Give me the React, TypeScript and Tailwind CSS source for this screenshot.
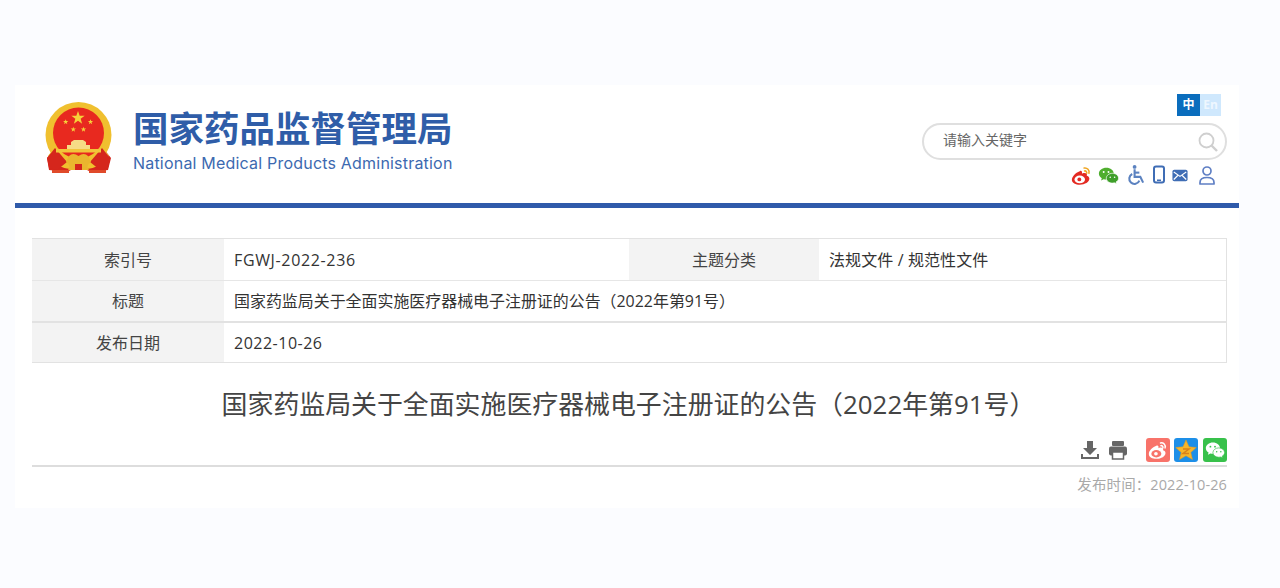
const cjk = "font-['Open_Sans','Noto_Sans_CJK_SC',sans-serif]";
const star = "M0 -1 L.24 -.32 H.95 L.38 .12 L.59 .81 L0 .4 L-.59 .81 L-.38 .12 L-.95 -.32 H-.24 Z";

function Emblem() {
  return (
    <svg width="68" height="72" viewBox="0 0 68 72" className="shrink-0">
      <path d="M10 46 L2 56 L4 68 L22 70 L34 64 L46 70 L63 68 L66 56 L58 46 Z" fill="#d5261c" />
      <circle cx="33.500" cy="33" r="33" fill="#f0c02f" />
      <circle cx="33.500" cy="31" r="25.500" fill="#e8291f" />
      <path d="M6 50 Q20 66 33.500 61 Q47 66 61 50 L64 54 Q50 71 33.500 66 Q17 71 3 54 Z" fill="#f0c02f" />
      <path d="M10 46 L22 60 L12 68 L4 66 L2 56 Z" fill="#d5261c" />
      <path d="M57 46 L45 60 L55 68 L63 66 L65 56 Z" fill="#d5261c" />
      <path d={star} transform="translate(33 16) scale(7)" fill="#f6d13a" />
      <path d={star} transform="translate(20.700 20) scale(2.800)" fill="#f6d13a" />
      <path d={star} transform="translate(45.500 20) scale(2.800)" fill="#f6d13a" />
      <path d={star} transform="translate(28.300 27.500) scale(2.800)" fill="#f6d13a" />
      <path d={star} transform="translate(38.500 27.500) scale(2.800)" fill="#f6d13a" />
      <path d="M22 47 V43 H26 V40 L29 38 H38 L41 40 V43 H45 V47 Z" fill="#f6dc86" />
      <rect x="11" y="47" width="45" height="3.500" fill="#f2c53a" />
      <path d="M24 54 Q28 50 33.500 54 Q39 50 43 54 L46 60 Q40 64 44 68 H23 Q27 64 21 60 Z" fill="#eab62e" />
      <rect x="30" y="62" width="7" height="6" fill="#d5261c" />
      <rect x="7" y="68" width="17" height="3" fill="#e04a2a" />
      <rect x="44" y="68" width="17" height="3" fill="#e04a2a" />
    </svg>
  );
}

function WeiboGlyph({ size, body, eye, arc }: { size: number; body: string; eye: string; arc: string }) {
  return (
    <svg width={size} height={size} viewBox="0 0 24 24">
      <path d="M10 7c-5 2-9 6-9 10 0 3.500 4.500 5.500 9 5.500 6 0 11-3 11-7 0-2.200-2-3-3-3.300.6-1.700.2-3.200-2.800-3.200-1 0-2.200.6-2.700.8.500-1.800-.300-4-2.500-2.800z" fill={body} />
      <ellipse cx="10" cy="16.500" rx="6" ry="4.400" fill={eye} />
      <circle cx="9.500" cy="16.500" r="2.200" fill={body} />
      <path d="M15 3.500c3.500-.6 6.500 2.400 5.500 6M15.500 6.800c1.600-.3 2.800 1 2.400 2.600" fill="none" stroke={arc} strokeWidth="1.800" strokeLinecap="round" />
    </svg>
  );
}

function WechatGlyph({ size, big, small, dot }: { size: number; big: string; small: string; dot: string }) {
  return (
    <svg width={size} height={size} viewBox="0 0 24 24">
      <path d="M9.500 3C4.800 3 1 6 1 9.800c0 2.200 1.300 4.100 3.300 5.300L3.500 17.800l3-1.600c1 .3 2 .4 3 .4 4.700 0 8.500-3 8.500-6.800S14.200 3 9.500 3z" fill={big} />
      <path d="M16.500 9.500c-3.900 0-7 2.500-7 5.600s3.100 5.600 7 5.600c.8 0 1.600-.1 2.300-.3l2.500 1.300-.7-2.200c1.700-1 2.900-2.600 2.900-4.400 0-3.100-3.100-5.600-7-5.600z" fill={small} stroke={dot} strokeWidth="0.800" />
      <circle cx="6.500" cy="8" r="1.100" fill={dot} />
      <circle cx="12" cy="8" r="1.100" fill={dot} />
      <circle cx="14" cy="14" r="0.900" fill={dot} />
      <circle cx="19" cy="14" r="0.900" fill={dot} />
    </svg>
  );
}

function TopIcons() {
  return (
    <div className="flex items-center justify-end pr-[12px] h-[24px]">
      <WeiboGlyph size={21} body="#e32a22" eye="#ffffff" arc="#f0a623" />
      <div className="ml-[6px]">
        <WechatGlyph size={21} big="#4fae2e" small="#3f9f2a" dot="#ffffff" />
      </div>
      <svg width="19" height="22" viewBox="0 0 20 22" fill="none" stroke="#5b82c0" strokeWidth="2.200" className="ml-[8px]">
        <circle cx="8" cy="2.500" r="2" fill="#5b82c0" stroke="none" />
        <path d="M8 5v8h6l3 6" />
        <path d="M8 8.500h5" />
        <path d="M5.500 10a5.500 5.500 0 1 0 7.500 7" />
      </svg>
      <svg width="14" height="20" viewBox="0 0 14 20" fill="none" className="ml-[6px]">
        <rect x="2" y="1.500" width="10" height="16" rx="2" stroke="#3f6db5" strokeWidth="2" />
        <rect x="5" y="14.500" width="4" height="1.500" fill="#3f6db5" />
      </svg>
      <svg width="16" height="13" viewBox="0 0 18 14" className="ml-[6px]">
        <rect x="0.500" y="0.500" width="17" height="13" rx="2" fill="#3f6db5" />
        <path d="M2 3l7 5 7-5M2 11.500l4.500-4.500M16 11.500L11.500 7" stroke="#ffffff" strokeWidth="1.300" fill="none" />
      </svg>
      <svg width="20" height="21" viewBox="0 0 20 20" fill="none" stroke="#5f7fc4" strokeWidth="1.700" className="ml-[9px] -mr-[2px]">
        <circle cx="10" cy="5.500" r="4" />
        <path d="M3 18.500v-1.500c0-2.800 2.500-5 7-5s7 2.200 7 5v1.500z" strokeLinejoin="round" />
      </svg>
    </div>
  );
}

function Cell({ label, children, w, lw }: { label: string; children: React.ReactNode; w?: string; lw?: string }) {
  return (
    <>
      <div className={`${lw ?? "w-[192px]"} shrink-0 bg-[#f3f3f3] flex items-center justify-center text-[16px] text-[#444]`}>{label}</div>
      <div className={`${w ?? "flex-1"} flex items-center pl-[10px] text-[16px] text-[#333]`}>{children}</div>
    </>
  );
}

export default function App() {
  return (
    <div className={`w-[1280px] h-[588px] bg-[#fbfcff] pt-[85px] pl-[15px] overflow-hidden ${cjk}`}>
      <div className="w-[1224px] h-[423px] bg-white">
        <header className="h-[118px] flex justify-between">
          <div className="flex pt-[17px] pl-[30px]">
            <Emblem />
            <div className="ml-[20px] pt-[1px]">
              <div className="text-[35.500px] leading-[50px] h-[50px] font-bold text-[#2f5da8] whitespace-nowrap">国家药品监督管理局</div>
              <div className="text-[16px] leading-[22px] -mt-[1px] text-[#3c69b0] tracking-[0.200px] font-['Inter',sans-serif] whitespace-nowrap">National Medical Products Administration</div>
            </div>
          </div>
          <div className="w-[305px] mr-[12px] flex flex-col">
            <div className="flex justify-end pt-[9px] pr-[6px]">
              <span className="w-[23px] h-[22px] bg-[#0a6dbd] text-white text-[12px] font-bold flex items-center justify-center">中</span>
              <span className="w-[21px] h-[22px] bg-[#cfe8fd] text-[#eef7ff] text-[12px] font-bold flex items-center justify-center">En</span>
            </div>
            <div className="mt-[7px] h-[37px] w-[305px] rounded-full border-2 border-[#dfdfdf] flex items-center justify-between pl-[19px] pr-[6px]">
              <span className="text-[14px] leading-[20px] -mt-[3px] text-[#666]">请输入关键字</span>
              <svg width="22" height="22" viewBox="0 0 22 22" fill="none" stroke="#cfcfcf" strokeWidth="1.800">
                <circle cx="9.500" cy="9.500" r="7" />
                <path d="M14.500 14.500L20 20" strokeWidth="2.400" />
              </svg>
            </div>
            <div className="mt-[3px]">
              <TopIcons />
            </div>
          </div>
        </header>
        <div className="h-[5px] bg-[#2f5aaa]" />

        <div className="mx-[17px] mt-[30px] w-[1195px] border-t border-r border-[#e2e2e2]">
          <div className="flex h-[42px] border-b border-[#e6e6e6]">
            <Cell label="索引号" w="w-[405px]"><span className="tracking-[0.650px]">FGWJ-2022-236</span></Cell>
            <Cell label="主题分类" lw="w-[190px]"><span className="tracking-[0.100px]">法规文件 / 规范性文件</span></Cell>
          </div>
          <div className="flex h-[42px] border-b-2 border-[#e2e2e2]">
            <Cell label="标题"><span className="text-[15.950px] mt-[2px]">国家药监局关于全面实施医疗器械电子注册证的公告（2022年第91号）</span></Cell>
          </div>
          <div className="flex h-[40px] border-b border-[#e2e2e2]">
            <Cell label="发布日期"><span className="tracking-[0.500px]">2022-10-26</span></Cell>
          </div>
        </div>

        <h1 className="mt-[21px] pl-[3px] text-center text-[25.900px] leading-[40px] font-normal text-[#444] whitespace-nowrap">
          国家药监局关于全面实施医疗器械电子注册证的公告（2022年第91号）
        </h1>

        <div className="mx-[17px] w-[1195px] mt-[14px] h-[29px] border-b-2 border-[#dddddd] flex justify-end items-start">
          <svg width="20" height="24" viewBox="0 0 20 24" className="mr-[8px]">
            <path d="M7 3h6v7h4l-7 7-7-7h4z" fill="#666" />
            <path d="M2 16v4h16v-4" stroke="#666" strokeWidth="2" fill="none" />
          </svg>
          <svg width="20" height="24" viewBox="0 0 20 24" className="mr-[18px]">
            <rect x="4" y="3" width="12" height="5" fill="#666" rx="1" />
            <rect x="1" y="8.500" width="18" height="9" rx="2" fill="#666" />
            <rect x="4.500" y="14" width="11" height="7" fill="#fff" stroke="#666" strokeWidth="1.500" />
          </svg>
          <div className="w-[24px] h-[24px] rounded-[3px] bg-[#f8736a] flex items-center justify-center">
            <WeiboGlyph size={20} body="#ffffff" eye="#f8736a" arc="#ffffff" />
          </div>
          <div className="ml-[4px] w-[24px] h-[24px] rounded-[3px] bg-[#1d8fe8] flex items-center justify-center">
            <svg width="22" height="22" viewBox="0 0 22 22">
              <path d="M11 1l3 6.800 7.300.7-5.500 4.900 1.700 7.200L11 16.800 4.500 20.600l1.700-7.200L.7 8.500 8 7.800z" fill="#f7b52a" stroke="#e59b1c" strokeWidth="0.500" />
              <path d="M8 10h6l-6 4.500h6" stroke="#d9821a" strokeWidth="1.500" fill="none" />
            </svg>
          </div>
          <div className="ml-[5px] w-[24px] h-[24px] rounded-[3px] bg-[#38c14b] flex items-center justify-center">
            <WechatGlyph size={20} big="#ffffff" small="#ffffff" dot="#38c14b" />
          </div>
        </div>

        <div className="mx-[17px] w-[1195px] mt-[6px] text-right text-[14.500px] leading-[24px] text-[#a9a9a9] tracking-[0.100px]">发布时间：2022-10-26</div>
      </div>
    </div>
  );
}
